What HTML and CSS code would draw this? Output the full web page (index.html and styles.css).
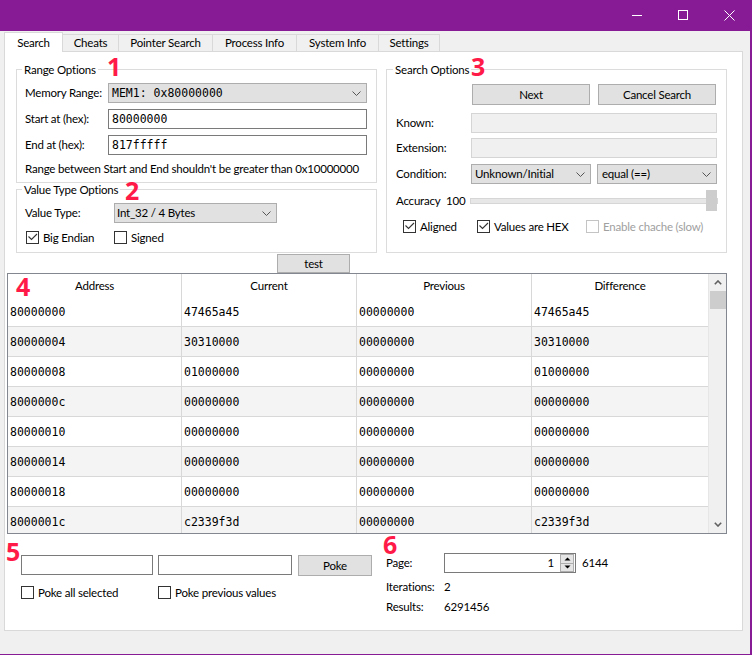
FILE: index.html
```html
<!DOCTYPE html>
<html lang="en">
<head>
<meta charset="utf-8">
<title>Search</title>
<link rel="stylesheet" href="styles.css">
</head>
<body>
<div class="window">
  <div class="titlebar">
    <div class="cap"><svg width="10" height="10" viewBox="0 0 10 10"><path d="M0 5.5H10" stroke="#fff" stroke-width="1"/></svg></div>
    <div class="cap"><svg width="10" height="10" viewBox="0 0 10 10"><rect x="0.5" y="0.5" width="9" height="9" fill="none" stroke="#fff" stroke-width="1"/></svg></div>
    <div class="cap"><svg width="11" height="11" viewBox="0 0 11 11"><path d="M0.5 0.5L10.5 10.5M10.5 0.5L0.5 10.5" stroke="#fff" stroke-width="1"/></svg></div>
  </div>

  <div class="tabs">
    <div class="tab active t-search">Search</div>
    <div class="tab t-cheats">Cheats</div>
    <div class="tab t-pointer">Pointer Search</div>
    <div class="tab t-process">Process Info</div>
    <div class="tab t-system">System Info</div>
    <div class="tab t-settings">Settings</div>
  </div>

  <div class="pane">
    <div class="top">
      <div class="leftcol">
        <fieldset class="group g-range">
          <legend>Range Options</legend>
          <div class="frow">
            <span class="lbl l-range">Memory Range:</span>
            <div class="combo mono grow">MEM1: 0x80000000<svg class="chev" width="9" height="5" viewBox="0 0 9 5"><polyline points="0.5,0.5 4.5,4.5 8.5,0.5" fill="none" stroke="#555" stroke-width="1"/></svg></div>
          </div>
          <div class="frow gap6">
            <span class="lbl l-range">Start at (hex):</span>
            <div class="input mono grow">80000000</div>
          </div>
          <div class="frow gap6">
            <span class="lbl l-range">End at (hex):</span>
            <div class="input mono grow">817fffff</div>
          </div>
          <div class="note">Range between Start and End shouldn't be greater than 0x10000000</div>
        </fieldset>

        <fieldset class="group g-vtype">
          <legend>Value Type Options</legend>
          <div class="frow">
            <span class="lbl l-vt">Value Type:</span>
            <div class="combo c-vt">Int_32 / 4 Bytes<svg class="chev" width="9" height="5" viewBox="0 0 9 5"><polyline points="0.5,0.5 4.5,4.5 8.5,0.5" fill="none" stroke="#555" stroke-width="1"/></svg></div>
          </div>
          <div class="checks vt-checks">
            <label class="chk w-big"><span class="box"><svg width="11" height="11" viewBox="0 0 11 11"><polyline points="1.5,4.5 4.5,7.5 10,2" fill="none" stroke="#333" stroke-width="1.1"/></svg></span>Big Endian</label>
            <label class="chk"><span class="box"></span>Signed</label>
          </div>
        </fieldset>
      </div>

      <fieldset class="group g-search">
        <legend>Search Options</legend>
        <div class="btnrow">
          <div class="btn b-wide">Next</div>
          <div class="btn b-wide">Cancel Search</div>
        </div>
        <div class="frow s-known">
          <span class="lbl l-search">Known:</span>
          <div class="input disabled grow"></div>
        </div>
        <div class="frow s-ext">
          <span class="lbl l-search">Extension:</span>
          <div class="input disabled grow"></div>
        </div>
        <div class="frow s-cond">
          <span class="lbl l-search">Condition:</span>
          <div class="combo c-cond">Unknown/Initial<svg class="chev" width="9" height="5" viewBox="0 0 9 5"><polyline points="0.5,0.5 4.5,4.5 8.5,0.5" fill="none" stroke="#555" stroke-width="1"/></svg></div>
          <div class="combo c-cond c-cond2">equal (==)<svg class="chev" width="9" height="5" viewBox="0 0 9 5"><polyline points="0.5,0.5 4.5,4.5 8.5,0.5" fill="none" stroke="#555" stroke-width="1"/></svg></div>
        </div>
        <div class="frow s-acc">
          <span class="lbl l-acc">Accuracy</span>
          <span class="accval">100</span>
          <div class="slider grow"><span class="handle"></span></div>
        </div>
        <div class="checks s-checks">
          <label class="chk w-aligned"><span class="box"><svg width="11" height="11" viewBox="0 0 11 11"><polyline points="1.5,4.5 4.5,7.5 10,2" fill="none" stroke="#333" stroke-width="1.1"/></svg></span>Aligned</label>
          <label class="chk w-hex"><span class="box"><svg width="11" height="11" viewBox="0 0 11 11"><polyline points="1.5,4.5 4.5,7.5 10,2" fill="none" stroke="#333" stroke-width="1.1"/></svg></span>Values are HEX</label>
          <label class="chk off"><span class="box"></span>Enable chache (slow)</label>
        </div>
      </fieldset>
    </div>

    <div class="testrow"><div class="btn b-test">test</div></div>

    <div class="table">
      <div class="grid">
        <div class="row head">
          <div class="cell">Address</div>
          <div class="cell">Current</div>
          <div class="cell">Previous</div>
          <div class="cell">Difference</div>
        </div>
        <div class="row"><div class="cell">80000000</div><div class="cell">47465a45</div><div class="cell">00000000</div><div class="cell">47465a45</div></div>
        <div class="row"><div class="cell">80000004</div><div class="cell">30310000</div><div class="cell">00000000</div><div class="cell">30310000</div></div>
        <div class="row"><div class="cell">80000008</div><div class="cell">01000000</div><div class="cell">00000000</div><div class="cell">01000000</div></div>
        <div class="row"><div class="cell">8000000c</div><div class="cell">00000000</div><div class="cell">00000000</div><div class="cell">00000000</div></div>
        <div class="row"><div class="cell">80000010</div><div class="cell">00000000</div><div class="cell">00000000</div><div class="cell">00000000</div></div>
        <div class="row"><div class="cell">80000014</div><div class="cell">00000000</div><div class="cell">00000000</div><div class="cell">00000000</div></div>
        <div class="row"><div class="cell">80000018</div><div class="cell">00000000</div><div class="cell">00000000</div><div class="cell">00000000</div></div>
        <div class="row"><div class="cell">8000001c</div><div class="cell">c2339f3d</div><div class="cell">00000000</div><div class="cell">c2339f3d</div></div>
      </div>
      <div class="vscroll">
        <div class="arrow"><svg width="8" height="5" viewBox="0 0 8 5"><polyline points="0.8,4.2 4,1 7.2,4.2" fill="none" stroke="#606060" stroke-width="1.6"/></svg></div>
        <div class="thumb"></div>
        <div class="track"></div>
        <div class="arrow"><svg width="8" height="5" viewBox="0 0 8 5"><polyline points="0.8,0.8 4,4 7.2,0.8" fill="none" stroke="#606060" stroke-width="1.6"/></svg></div>
      </div>
    </div>

    <div class="bottom">
      <div class="poke">
        <div class="pokerow">
          <div class="input p1"></div>
          <div class="input p2"></div>
          <div class="btn b-poke">Poke</div>
        </div>
        <div class="checks p-checks">
          <label class="chk w-pokeall"><span class="box"></span>Poke all selected</label>
          <label class="chk"><span class="box"></span>Poke previous values</label>
        </div>
      </div>
      <div class="stats">
        <div class="srow">
          <span class="lbl l-stat">Page:</span>
          <div class="spin">
            <span class="spinval">1</span>
            <span class="spinbtns">
              <span class="sb"><svg width="7" height="4" viewBox="0 0 7 4"><polygon points="0.5,3.5 3.5,0.5 6.5,3.5" fill="#000"/></svg></span>
              <span class="sb"><svg width="7" height="4" viewBox="0 0 7 4"><polygon points="0.5,0.5 3.5,3.5 6.5,0.5" fill="#000"/></svg></span>
            </span>
          </div>
          <span class="pages">6144</span>
        </div>
        <div class="srow s-iter"><span class="lbl l-stat">Iterations:</span><span>2</span></div>
        <div class="srow"><span class="lbl l-stat">Results:</span><span>6291456</span></div>
      </div>
    </div>
  </div>

  <span class="mark m1">1</span>
  <span class="mark m2">2</span>
  <span class="mark m3">3</span>
  <span class="mark m4">4</span>
  <span class="mark m5">5</span>
  <span class="mark m6">6</span>
</div>
</body>
</html>
```

FILE: styles.css
```css
* { box-sizing: border-box; }
html, body { margin: 0; padding: 0; }
body {
  width: 752px; height: 655px; overflow: hidden;
  background: #f0f0f0;
  font-family: "Lato", "Noto Sans", sans-serif;
  font-size: 11.5px; line-height: 16px; color: #000;
  letter-spacing: -0.2px;
}
.window {
  position: relative; width: 752px; height: 655px;
  border-right: 2px solid #871a95; border-bottom: 1px solid #871a95;
  background: #f0f0f0;
}
.titlebar {
  height: 31px; background: #871a95; margin-right: -2px;
  display: flex; justify-content: flex-end;
}
.cap { width: 46px; height: 31px; display: flex; justify-content: center; align-items: flex-start; padding-top: 10px; }
.cap svg { display: block; }

/* tabs */
.tabs { display: flex; align-items: flex-end; height: 20px; padding-left: 4px; }
.tab {
  height: 17px; border: 1px solid #d9d9d9; border-bottom: 0;
  margin-left: -1px; background: #f0f0f0; text-align: center;
  line-height: 16px; white-space: nowrap;
}
.tab:first-child { margin-left: 0; }
.tab.active { height: 20px; margin-bottom: -1px; background: #fff; position: relative; z-index: 1; padding-top: 2px; }
.t-search { width: 59px; }
.t-cheats { width: 57px; }
.t-pointer { width: 95px; }
.t-process { width: 85px; }
.t-system { width: 83px; }
.t-settings { width: 62px; }

/* pane */
.pane {
  margin-left: 4px; width: 739px; height: 580px;
  border: 1px solid #d9d9d9; background: #fff; padding-top: 10px;
}
.top { display: flex; margin-left: 11px; }
.leftcol { width: 361px; display: flex; flex-direction: column; }
.group {
  margin: 0; min-width: 0; border: 1px solid #dcdcdc;
  padding: 6px 9px 5px 8px;
}
.group legend { padding: 0 2px; margin-left: -3px; line-height: 15px; height: 15px; }
.g-vtype { margin-top: -1px; padding-bottom: 8px; }
.g-search { width: 341px; margin-left: 9px; padding: 6px 9px 0 9px; }

.frow { display: flex; align-items: center; height: 20px; }
.gap6 { margin-top: 6px; }
.grow { flex: 1; min-width: 0; }
.lbl { flex: none; white-space: nowrap; }
.l-range { width: 83px; }
.l-vt { width: 89px; }
.l-search { width: 75px; }
.l-acc { width: 50px; }
.l-stat { width: 58px; }

.mono { font-family: "DejaVu Sans Mono", "Liberation Mono", monospace; font-size: 11.5px; letter-spacing: 0; }
.combo {
  flex: none;
  height: 20px; background: #e1e1e1; border: 1px solid #adadad;
  display: flex; align-items: center; justify-content: space-between;
  padding: 0 5px 0 3px; white-space: nowrap;
}
.combo.grow { flex: 1; }
.combo .chev { flex: none; display: block; }
.c-vt { width: 163px; padding-left: 2px; }
.input {
  height: 20px; background: #fff; border: 1px solid #7a7a7a;
  display: flex; align-items: center; padding-left: 3px;
}
.input.disabled { background: #f0f0f0; border-color: #d5d5d5; }
.note { margin-top: 6px; height: 16px; white-space: nowrap; }

.checks { display: flex; align-items: center; height: 13px; }
.chk { display: flex; align-items: center; height: 13px; white-space: nowrap; }
.box {
  flex: none; width: 13px; height: 13px; border: 1px solid #333;
  background: #fff; margin-right: 4px; display: block;
}
.box svg { display: block; }
.chk.off { color: #a0a0a0; }
.chk.off .box { border-color: #c4c4c4; }
.vt-checks { margin-top: 8px; padding-left: 1px; }
.w-big { width: 88px; }

/* search group */
.btnrow { display: flex; margin-top: 1px; padding-left: 76px; gap: 8px; }
.btn {
  height: 21px; background: #e1e1e1; border: 1px solid #adadad;
  display: flex; align-items: center; justify-content: center; white-space: nowrap;
}
.b-wide { width: 118px; }
.s-known { margin-top: 8px; }
.s-ext { margin-top: 5px; }
.s-cond { margin-top: 6px; }
.c-cond { width: 120px; }
.c-cond2 { margin-left: 6px; padding-left: 4px; }
.s-acc { margin-top: 6px; height: 21px; }
.accval { width: 24px; flex: none; }
.slider { position: relative; height: 21px; display: flex; justify-content: flex-end; }
.slider::before {
  content: ""; position: absolute; left: 0; right: -1px; top: 8px; height: 4px;
  background: #e7e7e7; border: 1px solid #d6d6d6;
}
.handle { position: relative; width: 11px; height: 21px; background: #cdcdcd; }
.s-checks { margin-top: 9px; padding-left: 7px; }
.w-aligned { width: 74px; }
.w-hex { width: 109px; }

/* test */
.testrow { margin-top: 1px; padding-left: 272px; }
.b-test { width: 73px; height: 19px; }

/* table */
.table {
  margin-left: 2px; width: 720px; height: 261px;
  border: 1px solid #828790; display: flex; background: #fff;
}
.grid { flex: 1; overflow: hidden; }
.row {
  display: grid; grid-template-columns: 174px 175px 175px 176px;
  height: 30px; border-bottom: 1px solid #d8d8d8;
}
.row:nth-child(odd) { background: #f4f4f4; }
.row .cell {
  border-right: 1px solid #d8d8d8; padding-left: 2px;
  display: flex; align-items: center;
  font-family: "DejaVu Sans Mono", "Liberation Mono", monospace; font-size: 11.5px; letter-spacing: 0;
}
.row .cell:last-child { border-right: 0; }
.row.head { height: 23px; border-bottom: 0; background: #fff; }
.row.head .cell {
  justify-content: center; padding-left: 0;
  font-family: "Lato", "Noto Sans", sans-serif; font-size: 11.5px; letter-spacing: -0.2px;
}
.vscroll { width: 18px; border-left: 1px solid #e6e6e6; background: #f0f0f0; display: flex; flex-direction: column; }
.arrow { height: 17px; display: flex; align-items: center; justify-content: center; }
.arrow svg { display: block; }
.thumb { height: 18px; margin: 0 0 0 1px; background: #cdcdcd; }
.track { flex: 1; }

/* bottom */
.bottom { display: flex; }
.poke { width: 365px; margin-left: 16px; padding-top: 21px; }
.pokerow { display: flex; align-items: flex-start; }
.p1 { width: 132px; }
.p2 { width: 134px; margin-left: 5px; }
.b-poke { width: 74px; margin-left: 6px; }
.p-checks { margin-top: 10px; }
.w-pokeall { width: 137px; }

.stats { padding-top: 19px; }
.srow { display: flex; align-items: center; height: 20px; white-space: nowrap; }
.s-iter { margin-top: 4px; }
.spin {
  width: 132px; height: 20px; border: 1px solid #7a7a7a; background: #fff;
  display: flex; align-items: stretch; justify-content: flex-end;
}
.spinval { display: flex; align-items: center; padding-right: 6px; }
.spinbtns { width: 14px; margin: 0 1px 0 0; display: flex; flex-direction: column; border: 1px solid #adadad; background: #e5e5e5; }
.sb { flex: 1; display: flex; align-items: center; justify-content: center; }
.sb + .sb { border-top: 1px solid #adadad; }
.sb svg { display: block; }
.pages { margin-left: 6px; }

/* annotation numbers */
.mark {
  position: absolute; color: #ff1a47;
  font-family: "Noto Sans", "DejaVu Sans", sans-serif; font-weight: 700;
  font-size: 25px; line-height: 25px; letter-spacing: 0;
}
.m1 { left: 107px; top: 54px; }
.m2 { left: 125px; top: 178px; }
.m3 { left: 471px; top: 54px; }
.m4 { left: 16px; top: 274px; }
.m5 { left: 6px; top: 539px; }
.m6 { left: 383px; top: 532px; }
```
